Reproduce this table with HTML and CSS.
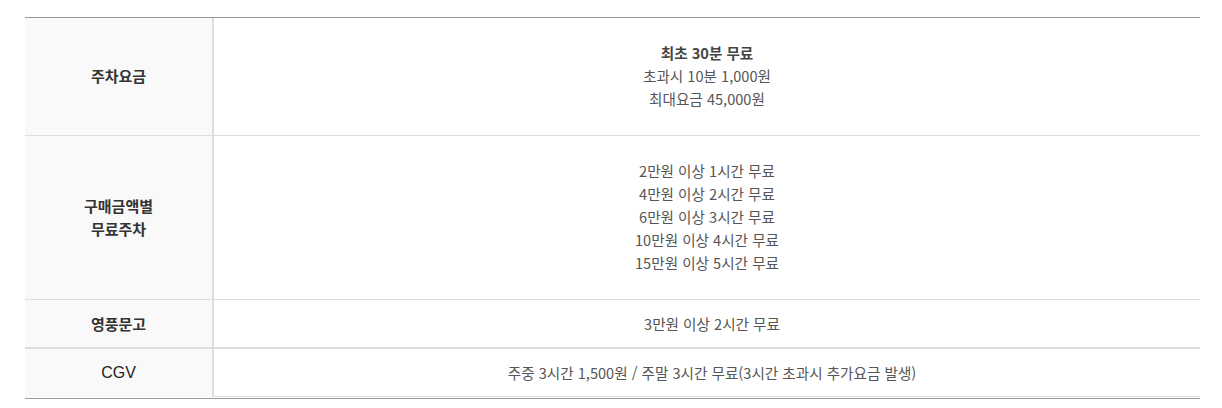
FILE: index.html
```html
<!DOCTYPE html>
<html lang="ko">
<head>
<meta charset="utf-8">
<link rel="stylesheet" href="styles.css">
</head>
<body>
<div class="wrap">
  <table class="fee">
    <tbody>
      <tr class="tall">
        <th>주차요금</th>
        <td><strong>최초 30분 무료</strong><br>초과시 10분 1,000원<br>최대요금 45,000원</td>
      </tr>
      <tr class="tall">
        <th>구매금액별<br>무료주차</th>
        <td>2만원 이상 1시간 무료<br>4만원 이상 2시간 무료<br>6만원 이상 3시간 무료<br>10만원 이상 4시간 무료<br>15만원 이상 5시간 무료</td>
      </tr>
      <tr class="short thick">
        <th>영풍문고</th>
        <td>3만원 이상 2시간 무료</td>
      </tr>
      <tr class="short last">
        <th class="latin">CGV</th>
        <td>주중 3시간 1,500원 / 주말 3시간 무료(3시간 초과시 추가요금 발생)</td>
      </tr>
    </tbody>
  </table>
</div>
</body>
</html>
```

FILE: styles.css
```css
html, body {
  margin: 0;
  padding: 0;
  background: #fff;
}
body {
  font-family: "Noto Sans CJK KR", "Noto Sans", sans-serif;
}
.wrap {
  margin: 17px 22px 0 25px;
  border-top: 1px solid #999;
  border-bottom: 1px solid #999;
  padding-bottom: 1px;
}
.fee {
  width: 100%;
  border-collapse: collapse;
  table-layout: fixed;
}
.fee th {
  width: 187px;
  background: #f9f9f9;
  border-right: 2px solid #ddd;
  border-bottom: 1px solid #ddd;
  color: #333;
  font-size: 15px;
  font-weight: 700;
  line-height: 23px;
  text-align: center;
  vertical-align: middle;
  padding: 0;
}
.fee td {
  border-bottom: 1px solid #ddd;
  color: #555;
  font-size: 14.6px;
  line-height: 23px;
  text-align: center;
  vertical-align: middle;
  padding: 0;
}
.fee td strong {
  color: #444;
  font-weight: 700;
}
.tall th, .tall td {
  padding: 23px 0 25px;
}
.short th, .short td {
  padding: 12px 0;
}
.short td {
  padding-left: 10px;
}
.thick th, .thick td {
  border-bottom-width: 2px;
}
.last th {
  border-bottom: none;
}
.fee th.latin {
  font-family: "Liberation Sans", Arial, sans-serif;
  font-size: 16px;
  font-weight: 400;
  color: #222;
}
```
